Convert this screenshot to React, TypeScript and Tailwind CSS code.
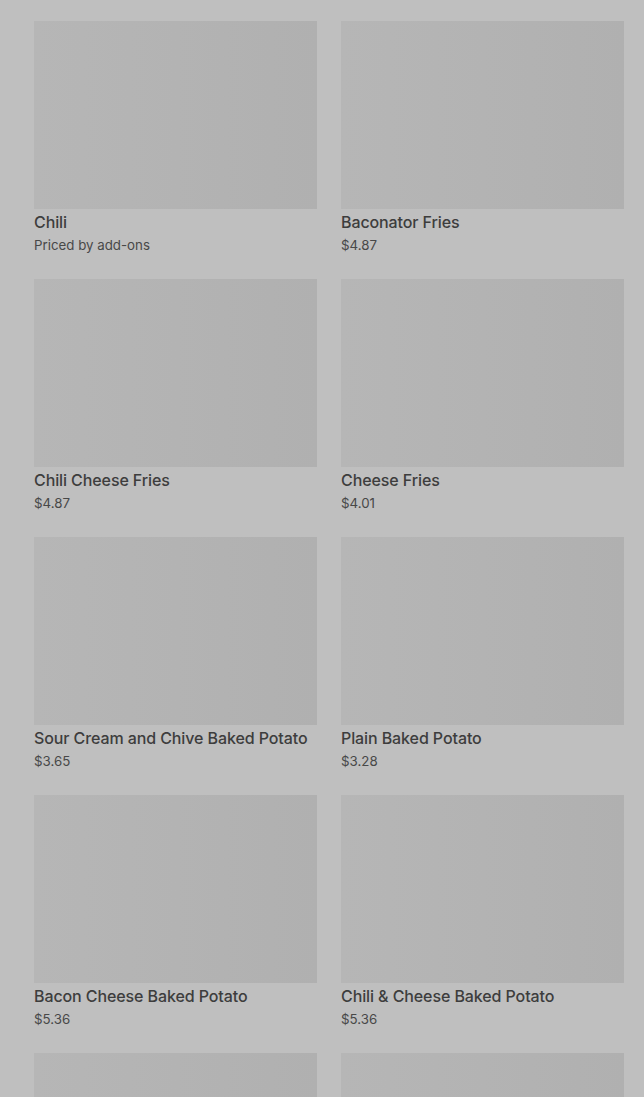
const ITEMS = [
  { name: "Chili", price: "Priced by add-ons" },
  { name: "Baconator Fries", price: "$4.87" },
  { name: "Chili Cheese Fries", price: "$4.87" },
  { name: "Cheese Fries", price: "$4.01" },
  { name: "Sour Cream and Chive Baked Potato", price: "$3.65" },
  { name: "Plain Baked Potato", price: "$3.28" },
  { name: "Bacon Cheese Baked Potato", price: "$5.36" },
  { name: "Chili & Cheese Baked Potato", price: "$5.36" },
];

export default function App() {
  return (
    <div
      className="h-[1097px] overflow-hidden bg-[#bfbfbf] pt-[21px] pl-[34px] pr-[20px]"
      style={{ fontFamily: "Inter, Roboto, 'Liberation Sans', sans-serif" }}
    >
      <div className="grid grid-cols-2 gap-x-[24px] gap-y-[24px]">
        {ITEMS.map((item) => (
          <div key={item.name} className="flex flex-col">
            <div className="h-[188px] bg-gradient-to-r from-[#b6b6b6] via-[#b3b3b3] to-[#b0b0b0]" />
            <div className="mt-[3px] text-[16px] leading-5 font-medium tracking-[-0.1px] text-[#3d3d3d] whitespace-nowrap">
              {item.name}
            </div>
            <div className="mt-[3px] text-[13.3px] leading-5 text-[#484848]">{item.price}</div>
          </div>
        ))}
        <div className="h-[188px] bg-gradient-to-r from-[#b6b6b6] via-[#b3b3b3] to-[#b0b0b0]" />
        <div className="h-[188px] bg-gradient-to-r from-[#b6b6b6] via-[#b3b3b3] to-[#b0b0b0]" />
      </div>
    </div>
  );
}
